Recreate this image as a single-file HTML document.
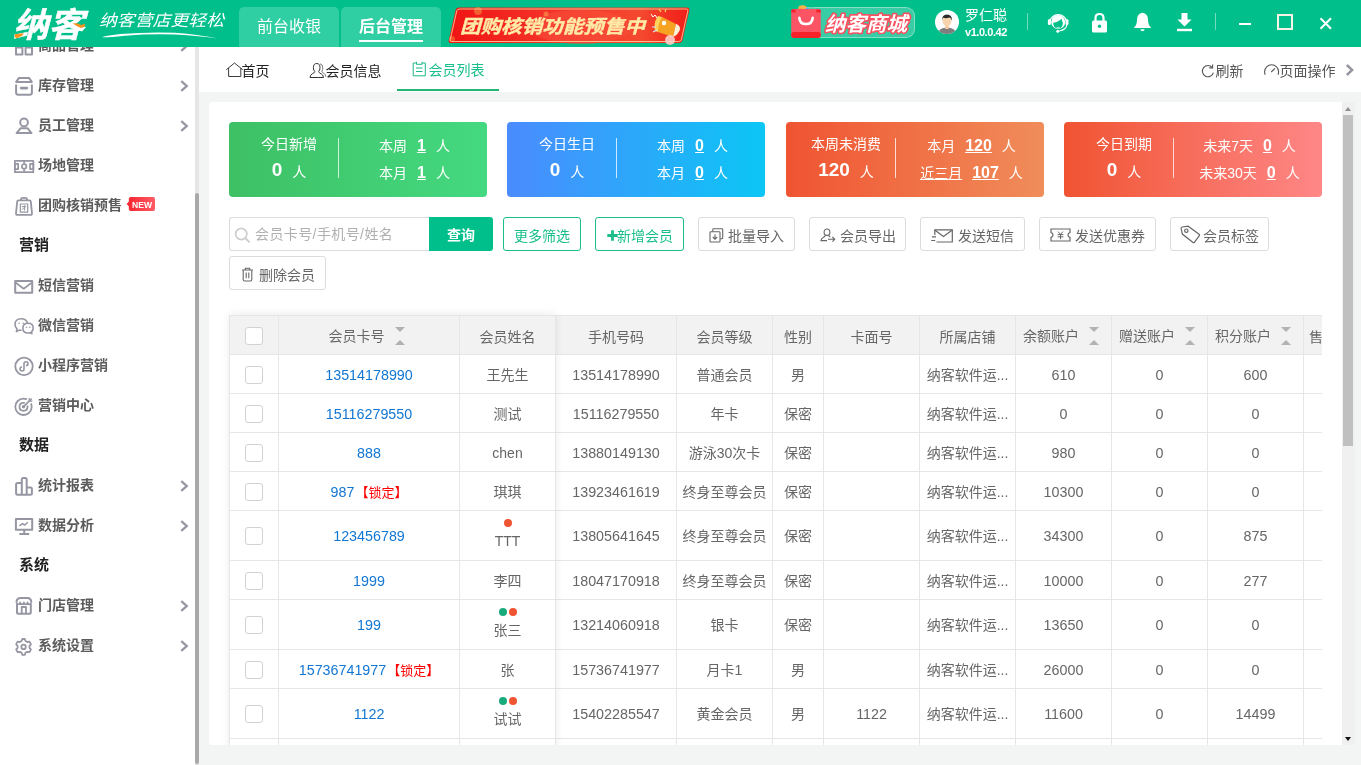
<!DOCTYPE html>
<html lang="zh-CN">
<head>
<meta charset="utf-8">
<title>纳客 - 会员列表</title>
<style>
*{box-sizing:border-box;margin:0;padding:0}
html,body{width:1361px;height:765px;overflow:hidden}
body{position:relative;background:#f3f5f5;font-family:"Liberation Sans","Noto Sans CJK SC",sans-serif;font-size:14px;color:#666}
a{text-decoration:none;color:inherit}
#top,#side,#tabs,#panel{will-change:transform}
/* ---------- top bar ---------- */
#top{position:absolute;left:0;top:0;width:1361px;height:47px;background:#00bf8b;z-index:10}
#top .mtab{position:absolute;top:7px;height:40px;width:100px;background:#30cfa3;border-radius:5px 5px 0 0;color:#fff;font-size:16px;text-align:center;line-height:39px}
#top .mtab.on{font-weight:bold}
#top .mtab.on:after{content:"";position:absolute;left:18px;width:64px;top:33px;height:2px;background:#fff}
#top .sep{position:absolute;top:13px;width:1px;height:17px;background:rgba(255,255,255,.45)}
#top .ico{position:absolute}
/* ---------- sidebar ---------- */
#side{position:absolute;left:0;top:47px;width:195px;height:718px;background:#fff;overflow:hidden}
#side .it{position:absolute;left:0;width:195px;height:40px;line-height:40px;font-size:14px;font-weight:bold;color:#5c5c5c}
#side .it svg.ic{position:absolute;left:14px;top:10px;width:20px;height:20px;overflow:visible}
#side .it span.t{position:absolute;left:38px;top:-1px}
#side .it svg.ch{position:absolute;left:178px;top:14px;width:12px;height:12px}
#side .hd{position:absolute;left:19px;margin-top:-1px;height:40px;line-height:40px;font-size:15px;font-weight:bold;color:#222}
#sscroll{position:absolute;left:195px;top:47px;width:4px;height:718px;background:#e6e6e6}
#sscroll i{position:absolute;left:0;top:146px;width:4px;height:571px;background:#a9a9a9;border-radius:2px}
/* ---------- page tabs ---------- */
#tabs{position:absolute;left:199px;top:47px;width:1162px;height:45px;background:#fff}
#tabs .pt{position:absolute;top:0;height:45px;line-height:48px;font-size:14px;color:#222;white-space:nowrap}
#tabs .pt svg{position:absolute}
#tabs .pt.on{color:#19be8b}
#tabs .ul{position:absolute;left:198px;top:42px;width:102px;height:2px;background:#22b573}
/* ---------- panel ---------- */
#panel{position:absolute;left:209px;top:102px;width:1133px;height:643px;background:#fff;border-radius:3px 0 0 3px;overflow:hidden}
.card{position:absolute;top:20px;width:258px;height:75px;border-radius:4px;color:#fff;font-size:14px}
.card div{position:absolute;white-space:nowrap;text-align:center}
.card .ttl{left:10px;width:100px;top:12px;line-height:20px}
.card .big{left:10px;width:100px;top:37px;line-height:24px}
.card .big b{font-size:19px;margin-right:10px;position:relative;top:-1.500px}
.card .dv{left:109px;top:16px;width:1px;height:40px;background:rgba(255,255,255,.75)}
.card .r1{left:112px;width:147px;top:14px;line-height:20px}
.card .r2{left:112px;width:147px;top:41px;line-height:20px}
.card u{font-weight:bold;font-size:16px;margin:0 10px}
/* toolbar */
.btn{position:absolute;height:34px;line-height:32px;border:1px solid #dcdcdc;border-radius:3px;background:#fff;color:#666;font-size:14px;white-space:nowrap}
.btn svg{position:absolute}
.btn span{position:absolute;top:2px}
.btn.g{border-color:#19be8b;color:#19be8b}
/* table */
#tbl{position:absolute;left:20px;top:213px;width:1093px;height:440px;overflow:hidden;border-left:1px solid #e6e6e6;border-top:1px solid #e6e6e6}
#tbl table{border-collapse:separate;border-spacing:0;table-layout:fixed;width:1194px}
#tbl th,#tbl td{border-right:1px solid #e6e6e6;border-bottom:1px solid #e6e6e6;height:39px;text-align:center;font-size:14px;font-weight:normal;color:#666;white-space:nowrap;overflow:hidden;padding:2px 0 0;vertical-align:middle;line-height:20px}
#tbl th{background:#f2f2f2;padding-top:4px}
#tbl th .cb{position:relative;top:-1px}
#tbl tr.tall td{height:50px;padding-top:1px}
#tbl td a{color:#1177d3}
#tbl td.n,#tbl td.n a{font-size:14.300px}
#tbl td em{font-style:normal;color:#f00;font-size:13px;margin-left:1px}
.cb{display:block;width:18px;height:18px;border:1px solid #d2d2d2;border-radius:3px;background:#fff;margin:0 auto 0 15px}
.dots{position:relative;top:-1px;display:block;height:8px;line-height:8px;font-size:0;margin:0 0 4px}
.dots i{display:inline-block;width:8px;height:8px;border-radius:50%;margin:0 1px}
.dots i.o{background:#f05533}
.dots i.g{background:#1aab7c}
.nm{position:relative;top:-1px;display:block;line-height:20px}
.st{display:inline-block;position:relative;width:10px;height:20px;vertical-align:middle;margin-left:10px;margin-right:5px;top:-2px}
.st:before{content:"";position:absolute;left:0;top:1px;border:5px solid transparent;border-top-color:#b2b2b2;border-bottom-width:0}
.st:after{content:"";position:absolute;left:0;top:14px;border:5px solid transparent;border-bottom-color:#b2b2b2;border-top-width:0}
/* main scrollbar */
#vs{position:absolute;left:1342px;top:102px;width:13px;height:643px;background:#f0f0f0}
#vs i{position:absolute;left:1px;top:13px;width:10px;height:331px;background:#c0c0c0}
#vs b{position:absolute;left:3px;width:0;height:0;border:3.500px solid transparent}
#vs b.u{top:5px;border-bottom:4px solid #909090;border-top-width:0}
#vs b.d{top:635px;border-top:4px solid #111;border-bottom-width:0}
</style>
</head>
<body>
<div id="top">
  <!-- LOGO-START --><svg class="ico" style="left:0;top:0" width="236" height="47" viewBox="0 0 236 47">
    <title>纳客 纳客营店更轻松</title>
    <text id="lg1" x="13" y="36.500" font-family="Liberation Sans, Noto Sans CJK SC, sans-serif" font-size="34" font-weight="bold" font-style="italic" fill="#fff" stroke="#fff" stroke-width=".5" textLength="71" lengthAdjust="spacingAndGlyphs">纳客</text>
    <path d="M14.600 36.200 Q14 34.200 16.500 34 L23.800 33.300 L22.500 35.600 L17 38.200 Q15.200 38.200 14.600 36.200Z M72.500 23.200 L78 23.600 L81 25 L85 23.800 L84.600 26.800 L81 28 L77.500 26.600Z" fill="#f7941d"/>
    <text id="lg2" x="99" y="26" font-family="Liberation Sans, Noto Sans CJK SC, sans-serif" font-size="16" font-style="italic" fill="#fff" textLength="125" lengthAdjust="spacingAndGlyphs">纳客营店更轻松</text>
    <path d="M102 37.300 Q104 35.800 120 34 Q150 31.600 175 32.800 Q200 34.800 218 38.600 Q200 36.200 175 34.600 Q150 33.800 125 35.800 Q108 37.600 102 37.300Z" fill="#fff"/>
  </svg><!-- LOGO-END -->
  <div class="mtab" style="left:239px">前台收银</div>
  <div class="mtab on" style="left:341px">后台管理</div>
  <!-- banner -->
  <svg class="ico" style="left:446px;top:5px" width="246" height="40" viewBox="0 0 246 40">
    <defs>
      <linearGradient id="bg1" x1="0" x2="1" y1="0" y2="0"><stop offset="0" stop-color="#f01414"/><stop offset=".45" stop-color="#f4342a"/><stop offset=".8" stop-color="#f5482f"/><stop offset="1" stop-color="#f01d17"/></linearGradient>
    </defs>
    <path d="M13.5 2.5 H241 Q244 2.5 243.2 5.5 L236.5 35 Q235.8 38 232.5 38 H5 Q2 38 2.800 35 L9.500 5.500 Q10.200 2.500 13.500 2.500Z" fill="url(#bg1)"/>
    <ellipse cx="135" cy="22" rx="52" ry="17" fill="#f7503a" opacity=".55"/>
    <circle cx="32" cy="6" r="4" fill="#f9a048" opacity=".5"/><circle cx="100" cy="9" r="2.500" fill="#f9a048" opacity=".6"/><circle cx="6" cy="34" r="3" fill="#f9a048" opacity=".45"/>
    <path d="M14.200 4 H240.500 Q242.300 4 241.900 5.800 L235.300 34.600 Q234.800 36.500 232.600 36.500 H5.600 Q3.800 36.500 4.200 34.700 L10.800 5.800 Q11.300 4 14.200 4Z" fill="none" stroke="#ffd9a0" stroke-width=".8"/>
    <text x="14" y="28" font-family="Liberation Sans, Noto Sans CJK SC, sans-serif" font-size="18.500" font-weight="bold" font-style="italic" fill="#ffeaa6" stroke="#ffeaa6" stroke-width=".35" textLength="185" lengthAdjust="spacingAndGlyphs">团购核销功能预售中</text>
    <!-- megaphone -->
    <g transform="translate(203,3)">
      <path d="M13 9 L27 16 L24 29 L9 24 Q8 16 13 9Z" fill="#f6a323"/>
      <path d="M13 9 Q9 16 9 24 L6 23 Q4 15 9 8Z" fill="#ffd35a"/>
      <path d="M27 16 Q31 17 31 21 Q30 26 24 29Z" fill="#fff3d6"/>
      <circle cx="15" cy="15" r="2.200" fill="#fff"/>
      <path d="M2 6 l2 3 l2 -2 l2 3" stroke="#fff" stroke-width="1" fill="none"/>
      <path d="M4 24 l4 -2 M3 19 l4 0" stroke="#cfe8ff" stroke-width="1.200"/>
      <circle cx="21" cy="32" r="5" fill="#fbd0c8" opacity=".9"/>
      <path d="M10 1 l2 3 M16 4 l1 -3" stroke="#ffd35a" stroke-width="1.200"/>
    </g>
  </svg>
  <!-- mall pill -->
  <div class="ico" style="left:797px;top:7px;width:118px;height:31px;border-radius:9px;background:rgba(255,255,255,.22);border:1px solid rgba(255,255,255,.38)"></div>
  <svg class="ico" style="left:790px;top:4px" width="34" height="36" viewBox="0 0 34 36">
    <ellipse cx="12.500" cy="4.500" rx="4.300" ry="3.300" fill="#f9b24a"/><circle cx="10.500" cy="6.500" r="2.200" fill="#f7864a"/><circle cx="17.600" cy="6" r="2.600" fill="#5aa9f0"/><ellipse cx="22" cy="6.300" rx="4.200" ry="3" fill="#5ec9a0"/>
    <path d="M3.500 5 H28.500 Q30.800 5 30.800 7.500 V31 Q30.800 34 27.800 34 H4.200 Q1.200 34 1.200 31 V7.500 Q1.200 5 3.500 5Z" fill="#fb5565"/>
    <path d="M2 5.400 H5.600 V8.400 H1.200 V7 Q1.200 5.600 2 5.400Z M26.400 5.400 H30 Q30.800 5.600 30.800 7 V8.400 H26.400Z" fill="#f5222d"/>
    <path d="M6 28 H28 Q30.800 28 30.800 30.500 V31 Q30.800 34 27.800 34 H4.200 Q1.200 34 1.200 31 V30.500 Q1.200 28 4 28Z" fill="#f5222a"/>
    <path d="M9.300 13.800 Q9.800 20 16 20 Q22.200 20 22.700 13.800" fill="none" stroke="#fff" stroke-width="2.600" stroke-linecap="round"/>
  </svg>
  <svg class="ico" style="left:822px;top:8px" width="92" height="30" viewBox="0 0 92 30">
    <text x="3" y="22.500" font-family="Liberation Sans, Noto Sans CJK SC, sans-serif" font-size="20" font-weight="bold" font-style="italic" fill="#fff" stroke="#f8505e" stroke-width="3.200" paint-order="stroke" stroke-linejoin="round" textLength="82" lengthAdjust="spacingAndGlyphs">纳客商城</text>
  </svg>
  <!-- avatar -->
  <svg class="ico" style="left:935px;top:10px" width="24" height="24" viewBox="0 0 24 24">
    <defs><clipPath id="avc"><circle cx="12" cy="12" r="12"/></clipPath></defs>
    <circle cx="12" cy="12" r="12" fill="#fff"/>
    <g clip-path="url(#avc)">
      <path d="M2.500 25 Q3 17.500 12 17.500 Q21 17.500 21.500 25Z" fill="#7d7d7d"/>
      <rect x="10.200" y="14.500" width="3.600" height="4.500" fill="#f2c9a0"/>
      <ellipse cx="12" cy="11.300" rx="4.300" ry="4.900" fill="#f8d4ac"/>
      <path d="M7.200 10.800 Q6.500 4.800 12 4.600 Q17.500 4.800 16.800 10.800 Q16 8 14.500 7.600 Q11 8.800 8.200 7.800 Q7.500 9 7.200 10.800Z" fill="#2b2b2b"/>
    </g>
  </svg>
  <div class="ico" style="left:965px;top:6px;color:#fff;font-size:14px;line-height:18px;white-space:nowrap">罗仁聪</div>
  <div class="ico" style="left:965px;top:25px;color:#fff;font-size:11px;font-weight:bold;line-height:14px;letter-spacing:-.45px;white-space:nowrap">v1.0.0.42</div>
  <div class="sep" style="left:1027px"></div>
  <!-- headset -->
  <svg class="ico" style="left:1047px;top:11px" width="22" height="22" viewBox="0 0 22 22">
    <path d="M2.600 11 A8.700 8.700 0 0 1 19.800 11" fill="none" stroke="#fff" stroke-width="1.100"/>
    <circle cx="11.200" cy="11" r="7" fill="#fff"/>
    <path d="M6.200 11.800 Q9.200 11.500 11.200 10.200 Q13.200 9 14.600 7.700 Q15 10 15.900 12 Q15.700 17.400 11.100 17.600 Q6.300 17.300 6.200 11.800Z" fill="#00bf8b"/>
    <path d="M9.600 16.300 Q11.200 16.900 12.800 16.300" fill="none" stroke="#fff" stroke-width=".7"/>
    <rect x=".9" y="8.200" width="3" height="5.800" rx="1.300" fill="#fff"/>
    <rect x="18.500" y="8.200" width="3" height="5.800" rx="1.300" fill="#fff"/>
    <path d="M19.900 13.600 Q19.400 18.600 12.200 20" fill="none" stroke="#fff" stroke-width="1.100"/>
    <circle cx="10.800" cy="20.200" r="1.500" fill="#fff"/>
  </svg>
  <!-- lock -->
  <svg class="ico" style="left:1091px;top:12px" width="17" height="21" viewBox="0 0 17 21">
    <path d="M4.500 9 V6 Q4.500 2 8.500 2 Q12.500 2 12.500 6 V9" fill="none" stroke="#fff" stroke-width="2.200"/>
    <rect x="1" y="8.500" width="15" height="12" rx="1.500" fill="#fff"/>
    <circle cx="8.500" cy="14.300" r="1.700" fill="#00bf8b"/>
  </svg>
  <!-- bell -->
  <svg class="ico" style="left:1133px;top:12px" width="19" height="20" viewBox="0 0 19 20">
    <path d="M9.500 .8 Q15 1.500 15 8 Q15 13 17.800 15.200 V16 H1.200 V15.200 Q4 13 4 8 Q4 1.500 9.500 .8Z" fill="#fff"/>
    <path d="M7.300 17.300 H11.700 Q11.200 19.200 9.500 19.200 Q7.800 19.200 7.300 17.300Z" fill="#fff"/>
  </svg>
  <!-- download -->
  <svg class="ico" style="left:1176px;top:12px" width="17" height="20" viewBox="0 0 17 20">
    <path d="M5.500 1 H11.500 V7.500 H15.500 L8.500 14.500 L1.500 7.500 H5.500Z" fill="#fff"/>
    <rect x="1" y="16.800" width="15" height="2.400" fill="#fff"/>
  </svg>
  <div class="sep" style="left:1215px"></div>
  <!-- window controls -->
  <div class="ico" style="left:1239px;top:23px;width:12px;height:2px;background:#fff"></div>
  <div class="ico" style="left:1277px;top:14px;width:16px;height:16px;border:2px solid #f6f3e6"></div>
  <svg class="ico" style="left:1318px;top:16px" width="15" height="15" viewBox="0 0 15 15"><path d="M2.500 2.200 L13 12.700 M13 2.200 L2.500 12.700" stroke="#fff" stroke-width="2" fill="none"/></svg>
</div>
<div id="side">
  <div class="it" style="top:-21px"><svg class="ic" viewBox="0 0 20 20"><g stroke="#9696a3" stroke-width="2" fill="none" stroke-linejoin="round"><rect x="2" y="2" width="6.400" height="6.400" rx=".6"/><rect x="11.600" y="2" width="6.400" height="6.400" rx=".6"/><rect x="2" y="11.400" width="6.400" height="7.200"/><rect x="11.600" y="11.400" width="6.400" height="7.200"/></g></svg><span class="t">商品管理</span><svg class="ch" viewBox="0 0 12 12"><path d="M3.300 1.200 L8.700 6 L3.300 10.800" stroke="#9696a3" stroke-width="2.300" fill="none"/></svg></div>
  <div class="it" style="top:19px"><svg class="ic" viewBox="0 0 20 20"><g stroke="#9696a3" stroke-width="2" fill="none" stroke-linejoin="round"><path d="M5 1.900 H15 L17.800 5.900 H2.200Z"/><path d="M2.100 8.600 V16.600 Q2.100 18.800 4.300 18.800 H15.700 Q17.900 18.800 17.900 16.600 V8.600"/><path d="M7.200 12.100 H12.800" stroke-width="2.800" stroke-linecap="round"/></g></svg><span class="t">库存管理</span><svg class="ch" viewBox="0 0 12 12"><path d="M3.300 1.200 L8.700 6 L3.300 10.800" stroke="#9696a3" stroke-width="2.300" fill="none"/></svg></div>
  <div class="it" style="top:59px"><svg class="ic" viewBox="0 0 20 20"><g stroke="#9696a3" stroke-width="2" fill="none" stroke-linejoin="round"><circle cx="10.050" cy="6.450" r="3.850"/><path d="M2.600 17.100 L6.700 12.200 H13.400 L17.500 17.100Z"/></g></svg><span class="t">员工管理</span><svg class="ch" viewBox="0 0 12 12"><path d="M3.300 1.200 L8.700 6 L3.300 10.800" stroke="#9696a3" stroke-width="2.300" fill="none"/></svg></div>
  <div class="it" style="top:99px"><svg class="ic" viewBox="0 0 20 20"><g stroke="#9696a3" fill="none" stroke-linejoin="round" stroke-width="1.700"><rect x=".85" y="4.850" width="18.500" height="11.300"/><path d="M10.100 4.850 V7.500 M10.100 13.500 V16.150"/><circle cx="10.100" cy="10.500" r="2.300"/><rect x=".85" y="7.900" width="3.300" height="5.200"/><rect x="16.050" y="7.900" width="3.300" height="5.200"/></g></svg><span class="t">场地管理</span></div>
  <div class="it" style="top:139px"><svg class="ic" viewBox="0 0 20 20"><g stroke="#9696a3" fill="none" stroke-linejoin="round" stroke-width="1.800"><path d="M7 4 V3.600 Q7 1.900 8.700 1.900 H11.300 Q13 1.900 13 3.600 V4"/><path d="M4.600 4.300 H15.400 Q16.700 4.300 16.800 5.600 L18 17.400 Q18.100 18.900 16.600 18.900 H3.400 Q1.900 18.900 2 17.400 L3.200 5.600 Q3.300 4.300 4.600 4.300Z"/><rect x="6.300" y="8" width="7.400" height="8.200" stroke-width="1.200"/><path d="M7.800 10.600 H12.200 M10.600 9.300 V14.600 M8 13.800 L10.500 11.200" stroke-width="1"/></g></svg><span class="t">团购核销预售</span><svg style="position:absolute;left:126px;top:11px" width="30" height="15" viewBox="0 0 30 15"><defs><linearGradient id="ng" x1="0" x2="1"><stop offset="0" stop-color="#f5222d"/><stop offset="1" stop-color="#ff5c66"/></linearGradient></defs><path d="M4.800 0 H27 Q29 0 29 2 V12 Q29 14 27 14 H4.800 Q2.800 14 2.800 12 V9.200 L.6 7 L2.800 4.800 V2 Q2.800 0 4.800 0Z" fill="url(#ng)"/><text x="6" y="10.500" font-family="Liberation Sans, sans-serif" font-size="8.500" fill="#fff" textLength="20" lengthAdjust="spacingAndGlyphs">NEW</text></svg></div>
  <div class="hd" style="top:179px">营销</div>
  <div class="it" style="top:219px"><svg class="ic" viewBox="0 0 20 20"><g stroke="#9696a3" stroke-width="2" fill="none" stroke-linejoin="round"><rect x="1.200" y="4.900" width="17" height="11.900"/><path d="M1.600 6.600 L9.700 12.700 L17.800 6.600" stroke-width="1.800"/></g></svg><span class="t">短信营销</span></div>
  <div class="it" style="top:259px"><svg class="ic" viewBox="0 0 20 20"><g stroke="#9696a3" fill="none" stroke-linejoin="round" stroke-width="1.600"><path d="M7.600 14 Q6.600 14.400 5.400 14.100 L2.400 15.600 L3 12.800 Q1 11 1 8.500 Q1 2.800 7.200 2.800 Q12.400 2.800 13.400 7"/><path d="M14.100 7.300 Q19.200 7.300 19.200 12.200 Q19.200 14.400 17.500 15.600 L17.900 17.600 L15.800 16.700 Q15 17 14.100 17 Q8.900 17 8.900 12.200 Q8.900 7.300 14.100 7.300Z"/></g><g stroke="#9696a3" stroke-width="1.100"><path d="M4.200 7.200 H6 M8.400 7.200 H10.200 M11.800 11.200 H13.400 M15 11.200 H16.600"/></g></svg><span class="t">微信营销</span></div>
  <div class="it" style="top:299px"><svg class="ic" viewBox="0 0 20 20"><g stroke="#9696a3" fill="none" stroke-linejoin="round" stroke-width="1.800"><circle cx="10" cy="10.400" r="8.700"/><path d="M10 13 Q10 15 8 15 Q6 15 6 13 Q6 11.200 8 11 M10 13 V7.800 Q10 5.800 12 5.800 Q14 5.800 14 7.800 Q14 9.600 12 9.800" stroke-width="1.600"/></g></svg><span class="t">小程序营销</span></div>
  <div class="it" style="top:339px"><svg class="ic" viewBox="0 0 20 20"><g stroke="#9696a3" fill="none" stroke-linejoin="round" stroke-width="1.800"><path d="M16.900 7.400 Q17.700 9 17.700 10.800 Q17.700 14.200 15.300 16.600 Q12.900 19 9.500 19 Q6.100 19 3.700 16.600 Q1.300 14.200 1.300 10.800 Q1.300 7.400 3.700 5 Q6.100 2.600 9.500 2.600 Q11.300 2.600 12.900 3.400"/><path d="M13.300 9.400 Q13.500 10.100 13.500 10.800 Q13.500 14.800 9.500 14.800 Q5.500 14.800 5.500 10.800 Q5.500 6.800 9.500 6.800 Q10.300 6.800 10.900 7"/><path d="M9.600 10.700 L17.600 2.700" stroke-width="1.700"/><path d="M15.200 2 V5.100 H18.300" stroke-width="1.200"/></g><circle cx="9.500" cy="10.800" r="1.700" fill="#9696a3"/></svg><span class="t">营销中心</span></div>
  <div class="hd" style="top:379px">数据</div>
  <div class="it" style="top:419px"><svg class="ic" viewBox="0 0 20 20"><g stroke="#9696a3" stroke-width="2" fill="none" stroke-linejoin="round"><path d="M7.800 18.600 V3.600 Q7.800 2.100 9.300 2.100 H11.200 Q12.700 2.100 12.700 3.600 V18.600"/><path d="M7.800 6.900 H3.600 Q2.100 6.900 2.100 8.400 V17.300 Q2.100 18.800 3.600 18.800 H16.400 Q17.900 18.800 17.900 17.300 V12.800 Q17.900 11.500 16.400 11.500 H12.700"/></g></svg><span class="t">统计报表</span><svg class="ch" viewBox="0 0 12 12"><path d="M3.300 1.200 L8.700 6 L3.300 10.800" stroke="#9696a3" stroke-width="2.300" fill="none"/></svg></div>
  <div class="it" style="top:459px"><svg class="ic" viewBox="0 0 20 20"><g stroke="#9696a3" stroke-width="2" fill="none" stroke-linejoin="round"><rect x="1.900" y="3" width="16.300" height="10.800"/><path d="M10.200 14 V18 M5.400 18.100 H15.200"/><path d="M5.400 9.900 L8.500 7.600 L10.800 9 L13.800 6.200" stroke-width="1.500"/></g></svg><span class="t">数据分析</span><svg class="ch" viewBox="0 0 12 12"><path d="M3.300 1.200 L8.700 6 L3.300 10.800" stroke="#9696a3" stroke-width="2.300" fill="none"/></svg></div>
  <div class="hd" style="top:499px">系统</div>
  <div class="it" style="top:539px"><svg class="ic" viewBox="0 0 20 20"><g stroke="#9696a3" stroke-width="2" fill="none" stroke-linejoin="round"><path d="M3 8 V16.200 Q3 17.700 4.500 17.700 H15.300 Q16.800 17.700 16.800 16.200 V8"/><path d="M2.500 6.600 Q2.500 2.100 6.500 2.100 H13.300 Q17.300 2.100 17.300 6.600"/><path d="M2.500 6.400 Q2.600 8.200 4.300 8.200 Q6.100 8.200 6.200 6.400 Q6.300 8.200 8 8.200 Q9.800 8.200 9.900 6.400 Q10 8.200 11.700 8.200 Q13.500 8.200 13.600 6.400 Q13.700 8.200 15.500 8.200 Q17.200 8.200 17.300 6.400" stroke-width="1.600"/><path d="M7.700 17.600 V11 H12 V17.600" stroke-width="1.800"/></g></svg><span class="t">门店管理</span><svg class="ch" viewBox="0 0 12 12"><path d="M3.300 1.200 L8.700 6 L3.300 10.800" stroke="#9696a3" stroke-width="2.300" fill="none"/></svg></div>
  <div class="it" style="top:579px"><svg class="ic" viewBox="0 0 20 20"><g stroke="#9696a3" fill="none" stroke-linejoin="round" stroke-width="1.800"><path d="M8.300 3 L9.550 2.900 L10.800 3 L11.500 5 L13.300 6 L15.300 5.600 Q16.500 6.800 16.900 8.400 L15.500 9.900 V11.900 L16.900 13.400 Q16.500 15 15.300 16.200 L13.300 15.800 L11.500 16.800 L10.800 18.800 Q9.550 19.100 8.300 18.800 L7.600 16.800 L5.800 15.800 L3.800 16.200 Q2.600 15 2.200 13.400 L3.600 11.900 V9.900 L2.200 8.400 Q2.600 6.800 3.800 5.600 L5.800 6 L7.600 5Z"/><circle cx="9.550" cy="10.900" r="2.200"/></g></svg><span class="t">系统设置</span><svg class="ch" viewBox="0 0 12 12"><path d="M3.300 1.200 L8.700 6 L3.300 10.800" stroke="#9696a3" stroke-width="2.300" fill="none"/></svg></div>
</div>
<div id="sscroll"><i></i></div>
<div id="tabs">
  <div class="pt" style="left:42.500px">
    <svg style="left:-17px;top:15px" width="19" height="16" viewBox="0 0 19 16"><path d="M1.300 7.700 L9.500 1 L17.700 7.700 M3.600 6 V14.500 H15.800 V6" fill="none" stroke="#333" stroke-width=".95"/></svg>首页</div>
  <div class="pt" style="left:126.500px">
    <svg style="left:-17px;top:15px" width="18" height="17" viewBox="0 0 18 17"><g fill="none" stroke="#333" stroke-width="1"><path d="M7.700 1.500 Q11 1.500 11 5.600 Q11 8.300 9.600 9.600 Q9.800 10.800 12.200 11.800 Q14.200 12.800 14.500 15.500 H1 Q1.300 12.800 3.300 11.800 Q5.700 10.800 5.800 9.600 Q4.400 8.300 4.400 5.600 Q4.400 1.500 7.700 1.500Z"/><path d="M11 1.800 Q13.800 2.200 13.800 5.800 Q13.800 8 12.800 9.200 Q13 10.400 14.800 11.200 Q16.600 12.200 16.800 14.800" stroke="#666" stroke-width=".9"/></g></svg>会员信息</div>
  <div class="pt on" style="left:229.500px;top:-1px">
    <svg style="left:-17px;top:15px" width="15" height="16" viewBox="0 0 15 16"><g fill="none" stroke="#1ab98a" stroke-width="1"><path d="M4.500 2 H1.200 V14.800 H13.300 V2 H10"/><path d="M4.500 .8 V3.300 H10 V.8"/><path d="M4 7 H10.500 M4 10.500 H10.500"/></g></svg>会员列表</div>
  <div class="ul"></div>
  <div class="pt" style="left:1016.500px;color:#555">
    <svg style="left:-15px;top:17px" width="14" height="14" viewBox="0 0 14 14"><path d="M11.300 3.600 A5.600 5.600 0 1 0 12.400 8.600" fill="none" stroke="#555" stroke-width="1.100"/><path d="M8.200 3.900 H11.600 V.6" fill="none" stroke="#555" stroke-width="1.100"/></svg>刷新</div>
  <div class="pt" style="left:1080.500px;color:#555">
    <svg style="left:-16px;top:17px" width="16" height="12" viewBox="0 0 16 12"><path d="M1.200 10.800 Q.6 9.400 .6 7.800 A7 7 0 0 1 14.600 7.800 Q14.600 9.400 14 10.800" fill="none" stroke="#555" stroke-width="1.100"/><path d="M7.200 8 L11 4.300" stroke="#555" stroke-width="1.100"/></svg>页面操作</div>
  <svg style="position:absolute;left:1146px;top:17px" width="10" height="12" viewBox="0 0 10 12"><path d="M1.800 1 L7.200 6 L1.800 11" fill="none" stroke="#9696a3" stroke-width="2.400"/></svg>
</div>
<div id="panel">
  <div class="card" style="left:20px;background:linear-gradient(90deg,#3ec065,#44d980)"><div class="ttl">今日新增</div><div class="big"><b>0</b>人</div><div class="dv"></div><div class="r1">本周<u>1</u>人</div><div class="r2">本月<u>1</u>人</div></div>
  <div class="card" style="left:298px;background:linear-gradient(90deg,#4b8bfe,#0bc6f5)"><div class="ttl">今日生日</div><div class="big"><b>0</b>人</div><div class="dv"></div><div class="r1">本周<u>0</u>人</div><div class="r2">本月<u>0</u>人</div></div>
  <div class="card" style="left:577px;background:linear-gradient(90deg,#f05432,#f08d5a)"><div class="ttl">本周未消费</div><div class="big"><b>120</b>人</div><div class="dv"></div><div class="r1">本月<u>120</u>人</div><div class="r2"><span style="text-decoration:underline">近三月</span><u>107</u>人</div></div>
  <div class="card" style="left:855px;background:linear-gradient(90deg,#f05432,#fe8787)"><div class="ttl">今日到期</div><div class="big"><b>0</b>人</div><div class="dv"></div><div class="r1">未来7天<u>0</u>人</div><div class="r2">未来30天<u>0</u>人</div></div>
  <!-- toolbar -->
  <div class="btn" style="left:20px;top:115px;width:200px;border-radius:3px 0 0 3px;border-right:0;color:#b0b0b0">
    <svg style="left:4px;top:9px" width="17" height="17" viewBox="0 0 17 17"><circle cx="7.200" cy="7" r="5.600" fill="none" stroke="#cdcdcd" stroke-width="1.700"/><path d="M11.200 11 L15.600 15.400" stroke="#cdcdcd" stroke-width="1.800"/></svg>
    <span style="left:25px;top:0;letter-spacing:.4px">会员卡号/手机号/姓名</span></div>
  <div class="btn" style="left:220px;top:115px;width:64px;border:0;background:#00bf8b;color:#fff;font-weight:bold;border-radius:0 3px 3px 0;line-height:36px;text-align:center">查询</div>
  <div class="btn g" style="left:294px;top:115px;width:78px;text-align:center;line-height:36px">更多筛选</div>
  <div class="btn g" style="left:386px;top:115px;width:89px">
    <svg style="left:11px;top:12px" width="11" height="11" viewBox="0 0 11 11"><path d="M5.500 .3 V10.700 M.3 5.500 H10.700" stroke="#19be8b" stroke-width="2.800"/></svg><span style="left:21px">新增会员</span></div>
  <div class="btn" style="left:489px;top:115px;width:97px">
    <svg style="left:10px;top:10px" width="15" height="15" viewBox="0 0 15 15"><g stroke="#666" stroke-width="1.100" fill="none"><path d="M3.800 3.600 V1.500 Q3.800 .8 4.500 .8 H13 Q13.700 .8 13.700 1.500 V10 Q13.700 10.700 13 10.700 H11"/><rect x="1" y="3.700" width="10" height="10.300" rx=".8"/><path d="M6 6.200 V11 M3.800 9 L6 11.200 L8.200 9"/></g></svg><span style="left:29px">批量导入</span></div>
  <div class="btn" style="left:600px;top:115px;width:97px">
    <svg style="left:10px;top:9px" width="16" height="16" viewBox="0 0 16 16"><g stroke="#666" stroke-width="1.100" fill="none"><ellipse cx="7" cy="5.200" rx="2.900" ry="3.200"/><path d="M5.400 8 Q5.300 9.600 3.200 10.400 Q1.200 11.200 1 13.600 H7 M8.600 8 Q8.700 9.300 10.200 10"/><path d="M8 12.300 H14.600 M12.400 10 L14.700 12.300 L12.400 14.600"/></g></svg><span style="left:30px">会员导出</span></div>
  <div class="btn" style="left:711px;top:115px;width:105px">
    <svg style="left:9px;top:9px" width="24" height="16" viewBox="0 0 24 16"><g stroke="#666" stroke-width="1.200" fill="none"><path d="M4.800 8 V2.900 H22.300 V15 H6.500"/><path d="M5 3.200 L13.500 9.400 L22 3.200"/><path d="M2 9.800 H6 M1.200 13.500 H5.200"/></g></svg><span style="left:37px">发送短信</span></div>
  <div class="btn" style="left:830px;top:115px;width:117px">
    <svg style="left:9px;top:10px" width="23" height="14" viewBox="0 0 23 14"><g stroke="#666" fill="none" stroke-width="1.200"><path d="M2 1 H21 V4.600 Q19 5 19 7 Q19 9 21 9.400 V13 H2 V9.400 Q4 9 4 7 Q4 5 2 4.600Z"/><path d="M9 3.600 L11.500 6.400 L14 3.600 M8.600 6.600 H14.400 M8.600 8.800 H14.400 M11.500 6.400 V11.200" stroke-width="1"/></g></svg><span style="left:35px">发送优惠券</span></div>
  <div class="btn" style="left:961px;top:115px;width:99px">
    <svg style="left:9px;top:6px" width="21" height="21" viewBox="0 0 21 21"><g stroke="#666" fill="none" stroke-width="1.200"><path d="M2 3.200 L2.400 9 L11.800 18.800 Q12.500 19.500 13.200 18.800 L19 13 Q19.700 12.300 19 11.600 L9.200 2 L3.200 2 Q2 2 2 3.200Z" transform="rotate(-8 10 10)"/><circle cx="6.300" cy="6.700" r="1.700"/></g></svg><span style="left:32px">会员标签</span></div>
  <div class="btn" style="left:20px;top:154px;width:97px">
    <svg style="left:11px;top:10px" width="13" height="15" viewBox="0 0 13 15"><g stroke="#666" stroke-width="1.100" fill="none"><path d="M1 3 H12 M4.300 3 V1.300 H8.700 V3"/><path d="M2.200 3.200 V12.600 Q2.200 14 3.600 14 H9.400 Q10.800 14 10.800 12.600 V3.200"/><path d="M5.200 5.600 V11.200 M7.800 5.600 V11.200"/></g></svg><span style="left:29px">删除会员</span></div>
  <div id="tbl"><table><colgroup><col style="width:49px"><col style="width:181px"><col style="width:96px"><col style="width:121px"><col style="width:96px"><col style="width:51px"><col style="width:96px"><col style="width:96px"><col style="width:96px"><col style="width:96px"><col style="width:96px"><col style="width:120px"></colgroup>
    <tr><th><span class="cb"></span></th><th>会员卡号<i class="st"></i></th><th>会员姓名</th><th>手机号码</th><th>会员等级</th><th>性别</th><th>卡面号</th><th>所属店铺</th><th>余额账户<i class="st"></i></th><th>赠送账户<i class="st"></i></th><th>积分账户<i class="st"></i></th><th style="text-align:left;padding-left:5px">售后账户</th></tr>
    <tr><td><span class="cb"></span></td><td class="n"><a>13514178990</a></td><td>王先生</td><td class="n">13514178990</td><td>普通会员</td><td>男</td><td class="n"></td><td>纳客软件运...</td><td class="n">610</td><td class="n">0</td><td class="n">600</td><td></td></tr>
    <tr><td><span class="cb"></span></td><td class="n"><a>15116279550</a></td><td>测试</td><td class="n">15116279550</td><td>年卡</td><td>保密</td><td class="n"></td><td>纳客软件运...</td><td class="n">0</td><td class="n">0</td><td class="n">0</td><td></td></tr>
    <tr><td><span class="cb"></span></td><td class="n"><a>888</a></td><td>chen</td><td class="n">13880149130</td><td>游泳30次卡</td><td>保密</td><td class="n"></td><td>纳客软件运...</td><td class="n">980</td><td class="n">0</td><td class="n">0</td><td></td></tr>
    <tr><td><span class="cb"></span></td><td class="n"><a>987</a><em>【锁定】</em></td><td>琪琪</td><td class="n">13923461619</td><td>终身至尊会员</td><td>保密</td><td class="n"></td><td>纳客软件运...</td><td class="n">10300</td><td class="n">0</td><td class="n">0</td><td></td></tr>
    <tr class="tall"><td><span class="cb"></span></td><td class="n"><a>123456789</a></td><td><span class="dots"><i class="o"></i></span><span class="nm">TTT</span></td><td class="n">13805641645</td><td>终身至尊会员</td><td>保密</td><td class="n"></td><td>纳客软件运...</td><td class="n">34300</td><td class="n">0</td><td class="n">875</td><td></td></tr>
    <tr><td><span class="cb"></span></td><td class="n"><a>1999</a></td><td>李四</td><td class="n">18047170918</td><td>终身至尊会员</td><td>保密</td><td class="n"></td><td>纳客软件运...</td><td class="n">10000</td><td class="n">0</td><td class="n">277</td><td></td></tr>
    <tr class="tall"><td><span class="cb"></span></td><td class="n"><a>199</a></td><td><span class="dots"><i class="g"></i><i class="o"></i></span><span class="nm">张三</span></td><td class="n">13214060918</td><td>银卡</td><td>保密</td><td class="n"></td><td>纳客软件运...</td><td class="n">13650</td><td class="n">0</td><td class="n">0</td><td></td></tr>
    <tr><td><span class="cb"></span></td><td class="n"><a>15736741977</a><em>【锁定】</em></td><td>张</td><td class="n">15736741977</td><td>月卡1</td><td>男</td><td class="n"></td><td>纳客软件运...</td><td class="n">26000</td><td class="n">0</td><td class="n">0</td><td></td></tr>
    <tr class="tall"><td><span class="cb"></span></td><td class="n"><a>1122</a></td><td><span class="dots"><i class="g"></i><i class="o"></i></span><span class="nm">试试</span></td><td class="n">15402285547</td><td>黄金会员</td><td>男</td><td class="n">1122</td><td>纳客软件运...</td><td class="n">11600</td><td class="n">0</td><td class="n">14499</td><td></td></tr>
    <tr><td></td><td class="n"><a></a></td><td></td><td class="n"></td><td></td><td></td><td class="n"></td><td></td><td class="n"></td><td class="n"></td><td class="n"></td><td></td></tr>
  </table></div>
  <div style="position:absolute;left:20px;top:213px;width:327px;height:440px;box-shadow:0 -1px 8px rgba(0,0,0,.08);pointer-events:none"></div>
</div>
<div id="vs"><b class="u"></b><i></i><b class="d"></b></div>
</body>
</html>
